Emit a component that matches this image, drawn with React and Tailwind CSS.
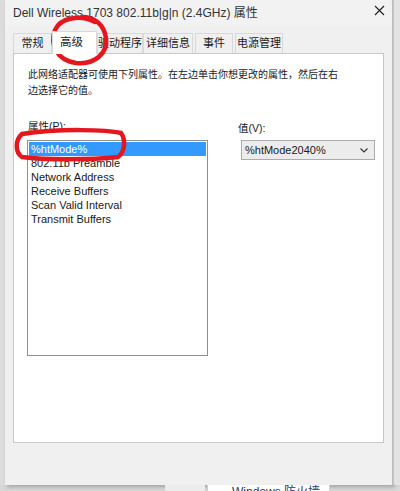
import React from 'react';

const tabs = [
  { label: '常规', w: 'w-[39px]' },
  { label: '高级', w: 'w-[45px]', active: true },
  { label: '驱动程序', w: 'w-[46px]' },
  { label: '详细信息', w: 'w-[50px]' },
  { label: '事件', w: 'w-[38px] ml-[2px]' },
  { label: '电源管理', w: 'w-[48px] ml-[2px]' },
];
const props = ['%htMode%', '802.11b Preamble', 'Network Address', 'Receive Buffers', 'Scan Valid Interval', 'Transmit Buffers'];

function Tab({ label, w, active }) {
  if (active) {
    return (
      <div className={w + ' relative z-10 -mb-px h-[23px] pl-[7px] bg-white border border-[#d9d9d9] border-b-0 flex items-center text-[11.5px] whitespace-nowrap'}>
        {label}
      </div>
    );
  }
  return (
    <div className={w + ' h-[20px] bg-[#f0f0f0] border border-[#d9d9d9] border-b-0 flex items-center justify-center text-[11px] whitespace-nowrap'}>
      {label}
    </div>
  );
}

export default function App() {
  return (
    <div
      className="relative w-[400px] h-[491px] overflow-hidden bg-[#d8d8d8] text-[#1a1a1a] flex flex-col"
      style={{ fontFamily: '"Liberation Sans", "Noto Sans CJK SC", sans-serif' }}
    >
      <div className="flex h-[485px]">
        {/* background window on the left */}
        <div className="w-[5px] bg-[#dcdcdc]" />

        {/* dialog */}
        <div className="w-[388px] flex flex-col bg-[#f0f0f0] border-r border-[#bdbdbd] shadow-[2px_2px_4px_rgba(0,0,0,0.25)]">
          {/* title bar */}
          <div className="h-[26px] flex items-center justify-between pl-[8px] pr-[7px] bg-[#f2f2f2]">
            <span className="text-[12px] text-[#333]">Dell Wireless 1703 802.11b|g|n (2.4GHz) 属性</span>
            <svg width="11" height="11" viewBox="0 0 11 11" className="-mt-[6px]">
              <path d="M1 1 L10 10 M10 1 L1 10" stroke="#222" strokeWidth="1.2" />
            </svg>
          </div>

          {/* tabs */}
          <div className="flex items-end pl-[8px] mt-[5px]">
            {tabs.map((t) => (
              <Tab key={t.label} {...t} />
            ))}
          </div>

          {/* panel */}
          <div className="mx-[8px] h-[390px] bg-white border border-[#c8c8c8] pt-[13px] px-[13px]">
            <p className="text-[10px] leading-[16px] pl-[1px]">
              此网络适配器可使用下列属性。在左边单击你想更改的属性，然后在右
              <br />
              边选择它的值。
            </p>

            <div className="flex mt-[20px]">
              <div className="w-[181px] shrink-0">
                <div className="text-[10.5px] leading-[14px] pl-[1px] mb-[7px]">属性(P):</div>
                <div className="h-[216px] border border-[#8f8f8f] p-[1px]">
                  {props.map((p, i) => (
                    <div
                      key={p}
                      className={
                        'h-[14px] leading-[14px] pl-[2px] text-[11px] ' +
                        (i === 0 ? 'bg-[#3399ff] text-white' : '')
                      }
                    >
                      {p}
                    </div>
                  ))}
                </div>
              </div>

              <div className="ml-[30px] pt-[2px]">
                <div className="text-[10.5px] leading-[14px] mb-[5px]">值(V):</div>
                <div className="ml-[3px] w-[134px] h-[20px] border border-[#acacac] bg-[#ececec] flex items-center justify-between pl-[3px] pr-[6px] text-[11px]">
                  <span>%htMode2040%</span>
                  <svg width="8" height="5" viewBox="0 0 8 5">
                    <path d="M0.5 0.5 L4 4 L7.5 0.5" fill="none" stroke="#333" strokeWidth="1.1" />
                  </svg>
                </div>
              </div>
            </div>
          </div>
        </div>

        {/* background window on the right */}
        <div className="flex-1 bg-[#e4e4e4] border-l border-[#c4c4c4]" />
      </div>

      {/* background strip at the bottom */}
      <div className="h-[6px] flex">
        <div className="ml-[165px] w-[40px] bg-[#ececec]" />
        <div className="ml-[2px] w-[123px] bg-white border-x border-[#cfcfcf] pl-[24px] text-[12px] leading-[14px] text-[#1e3a6e]">
          Windows 防火墙
        </div>
      </div>

      {/* red hand-drawn marks */}
      <svg className="absolute inset-0 pointer-events-none" width="400" height="491" viewBox="0 0 400 491">
        <path
          d="M 95 22 C 80 14, 60 18, 55 30 C 50 44, 56 60, 76 63 C 96 65, 108 52, 106 38 C 104 24, 94 17, 82 17"
          fill="none"
          stroke="#e5161d"
          strokeWidth="4.5"
          strokeLinecap="round"
        />
        <path
          d="M 22 134 C 60 128, 108 130, 121 133 C 126 140, 125 152, 118 157 C 90 160, 45 160, 22 157 C 15 152, 15 140, 22 134"
          fill="none"
          stroke="#e5161d"
          strokeWidth="4.5"
          strokeLinecap="round"
        />
      </svg>
    </div>
  );
}
